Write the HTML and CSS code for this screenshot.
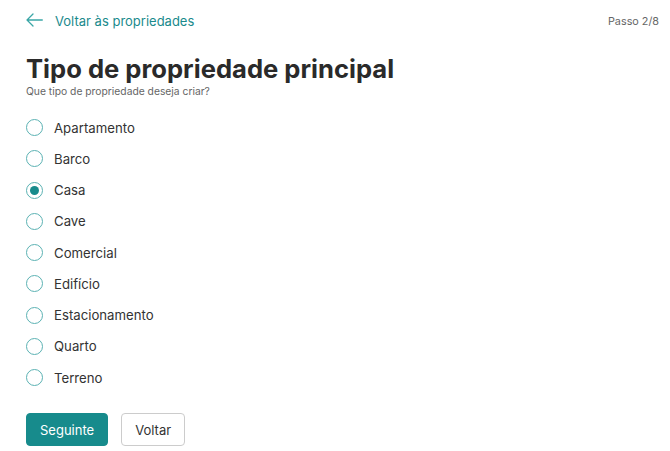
FILE: index.html
```html
<!DOCTYPE html>
<html lang="pt">
<head>
    <meta charset="UTF-8">
    <meta name="viewport" content="width=device-width, initial-scale=1.0">
    <title>Tipo de propriedade principal</title>
    <link rel="stylesheet" href="styles.css">
</head>
<body>
    <div class="top-bar">
        <a class="back-link" href="#">
            <svg width="17" height="14" viewBox="0 0 17 14" fill="none" stroke="#3aa6a6" stroke-width="1.3" stroke-linecap="round" stroke-linejoin="round">
                <path d="M16.3 7H1M7 1L1 7l6 6"/>
            </svg>
            <span>Voltar às propriedades</span>
        </a>
        <span class="step">Passo 2/8</span>
    </div>

    <h1>Tipo de propriedade principal</h1>
    <p class="subtitle">Que tipo de propriedade deseja criar?</p>

    <div class="options">
        <label class="option"><input type="radio" name="tipo"><span class="dot"></span>Apartamento</label>
        <label class="option"><input type="radio" name="tipo"><span class="dot"></span>Barco</label>
        <label class="option"><input type="radio" name="tipo" checked><span class="dot"></span>Casa</label>
        <label class="option"><input type="radio" name="tipo"><span class="dot"></span>Cave</label>
        <label class="option"><input type="radio" name="tipo"><span class="dot"></span>Comercial</label>
        <label class="option"><input type="radio" name="tipo"><span class="dot"></span>Edifício</label>
        <label class="option"><input type="radio" name="tipo"><span class="dot"></span>Estacionamento</label>
        <label class="option"><input type="radio" name="tipo"><span class="dot"></span>Quarto</label>
        <label class="option"><input type="radio" name="tipo"><span class="dot"></span>Terreno</label>
    </div>

    <div class="actions">
        <button class="btn btn-primary">Seguinte</button>
        <button class="btn btn-secondary">Voltar</button>
    </div>
</body>
</html>
```
FILE: styles.css
```css
body {
    margin: 0;
    padding: 0 11px 0 26px;
    font-family: "Inter", "Noto Sans", sans-serif;
    color: #333;
    background: #fff;
}
.top-bar {
    display: flex;
    align-items: center;
    justify-content: space-between;
    height: 42px;
}
.back-link {
    display: flex;
    align-items: center;
    gap: 12px;
    color: #1a8a8c;
    text-decoration: none;
    font-size: 13px;
}
.back-link svg {
    margin-top: -2px;
}
.step {
    font-size: 10.8px;
    color: #666;
}
h1 {
    margin: 11px 0 0;
    font-size: 25.6px;
    font-weight: 700;
    line-height: 32px;
    color: #2a2a2a;
}
.subtitle {
    margin: 0;
    font-size: 10.3px;
    line-height: 13px;
    color: #666;
}
.options {
    display: flex;
    flex-direction: column;
    margin-top: 14px;
}
.option {
    display: flex;
    align-items: center;
    height: 31.25px;
    font-size: 13.2px;
    color: #333;
    cursor: pointer;
}
.option input {
    display: none;
}
.dot {
    box-sizing: border-box;
    width: 17px;
    height: 17px;
    margin-right: 11px;
    border: 1.5px solid #5bb2b3;
    border-radius: 50%;
    display: flex;
    align-items: center;
    justify-content: center;
}
.option input:checked + .dot::after {
    content: "";
    width: 9px;
    height: 9px;
    border-radius: 50%;
    background: #178b8c;
}
.actions {
    display: flex;
    gap: 13px;
    margin-top: 20px;
}
.btn {
    height: 33px;
    padding: 0 13px;
    border-radius: 4px;
    font-family: inherit;
    font-size: 13px;
    cursor: pointer;
}
.btn-primary {
    background: #178b8c;
    color: #fff;
    border: 1px solid #178b8c;
}
.btn-secondary {
    background: #fff;
    color: #333;
    border: 1px solid #ccc;
}
```
